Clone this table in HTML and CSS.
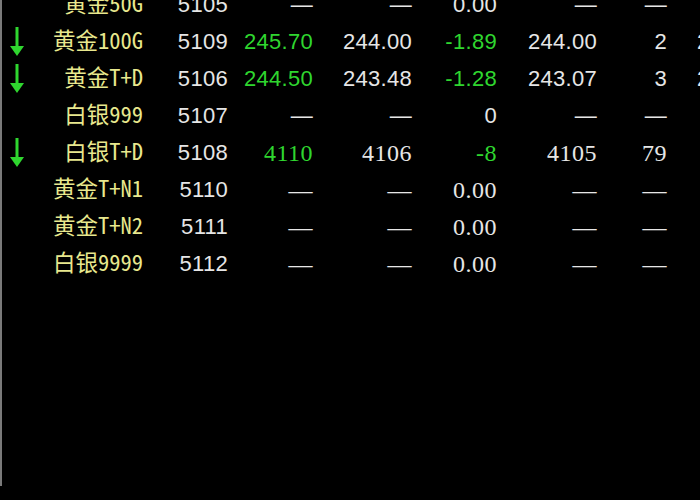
FILE: index.html
```html
<!DOCTYPE html>
<html lang="zh-CN">
<head>
    <meta charset="UTF-8" />
    <meta name="viewport" content="width=device-width, initial-scale=1.0" />
    <title>行情报价</title>
    <link rel="stylesheet" href="styles.css">
</head>
<body>
    <div class="quote-board">
        <div class="quote-row">
            <div class="trend"></div>
            <div class="name">黄金50G</div>
            <div class="code">5105</div>
            <div class="num">—</div>
            <div class="num wide">—</div>
            <div class="num">0.00</div>
            <div class="num wide">—</div>
            <div class="num short">—</div>
            <div class="extra"></div>
        </div>
        <div class="quote-row">
            <div class="trend"><svg class="arrow" viewBox="0 0 14 30"><rect x="5.5" y="0" width="3" height="20" /><polygon points="0,19 14,19 7,29" /></svg></div>
            <div class="name">黄金100G</div>
            <div class="code">5109</div>
            <div class="num down">245.70</div>
            <div class="num wide">244.00</div>
            <div class="num down">-1.89</div>
            <div class="num wide">244.00</div>
            <div class="num short">2</div>
            <div class="extra">2</div>
        </div>
        <div class="quote-row">
            <div class="trend"><svg class="arrow" viewBox="0 0 14 30"><rect x="5.5" y="0" width="3" height="20" /><polygon points="0,19 14,19 7,29" /></svg></div>
            <div class="name">黄金T+D</div>
            <div class="code">5106</div>
            <div class="num down">244.50</div>
            <div class="num wide">243.48</div>
            <div class="num down">-1.28</div>
            <div class="num wide">243.07</div>
            <div class="num short">3</div>
            <div class="extra">2</div>
        </div>
        <div class="quote-row">
            <div class="trend"></div>
            <div class="name">白银999</div>
            <div class="code">5107</div>
            <div class="num">—</div>
            <div class="num wide">—</div>
            <div class="num">0</div>
            <div class="num wide">—</div>
            <div class="num short">—</div>
            <div class="extra"></div>
        </div>
        <div class="quote-row serif">
            <div class="trend"><svg class="arrow" viewBox="0 0 14 30"><rect x="5.5" y="0" width="3" height="20" /><polygon points="0,19 14,19 7,29" /></svg></div>
            <div class="name">白银T+D</div>
            <div class="code">5108</div>
            <div class="num down">4110</div>
            <div class="num wide">4106</div>
            <div class="num down">-8</div>
            <div class="num wide">4105</div>
            <div class="num short">79</div>
            <div class="extra"></div>
        </div>
        <div class="quote-row serif">
            <div class="trend"></div>
            <div class="name">黄金T+N1</div>
            <div class="code">5110</div>
            <div class="num">—</div>
            <div class="num wide">—</div>
            <div class="num">0.00</div>
            <div class="num wide">—</div>
            <div class="num short">—</div>
            <div class="extra"></div>
        </div>
        <div class="quote-row serif">
            <div class="trend"></div>
            <div class="name">黄金T+N2</div>
            <div class="code">5111</div>
            <div class="num">—</div>
            <div class="num wide">—</div>
            <div class="num">0.00</div>
            <div class="num wide">—</div>
            <div class="num short">—</div>
            <div class="extra"></div>
        </div>
        <div class="quote-row serif">
            <div class="trend"></div>
            <div class="name">白银9999</div>
            <div class="code">5112</div>
            <div class="num">—</div>
            <div class="num wide">—</div>
            <div class="num">0.00</div>
            <div class="num wide">—</div>
            <div class="num short">—</div>
            <div class="extra"></div>
        </div>
    </div>
</body>
</html>
```

FILE: styles.css
```css
:root {
    --bg-color: #000;
    --text-color: #e6e6e6;
    --name-color: #e8e88e;
    --down-color: #2fd62f;
    --border-color: #7a7a7a;
    --row-height: 37px;
}

html,
body {
    margin: 0;
    padding: 0;
    height: 100%;
    background-color: var(--bg-color);
    overflow: hidden;
}

.quote-board {
    height: 100%;
    border-left: 2px solid var(--border-color);
    box-sizing: border-box;
}

.quote-row {
    display: grid;
    grid-template-columns: 30px 111px 85px 85px 99px 85px 100px 70px 1fr;
    align-items: center;
    height: var(--row-height);
    color: var(--text-color);
    font-family: 'Liberation Sans', Arial, sans-serif;
    font-size: 22px;
    letter-spacing: 0.3px;
    white-space: nowrap;
}

.quote-row:first-child {
    margin-top: -14px;
}

.trend {
    display: flex;
    justify-content: center;
    align-items: center;
}

.arrow {
    width: 14px;
    height: 30px;
    fill: var(--down-color);
}

.name {
    text-align: right;
    color: var(--name-color);
    font-family: 'Noto Sans Mono CJK SC', 'Noto Sans CJK SC', sans-serif;
    font-size: 22.5px;
    letter-spacing: 0;
    padding-bottom: 6px;
}

.code,
.num {
    text-align: right;
}

.num.down {
    color: var(--down-color);
}

.serif .num {
    font-family: 'Liberation Serif', 'Times New Roman', serif;
    font-size: 24px;
    letter-spacing: 0.5px;
}

.extra {
    padding-left: 30px;
    overflow: hidden;
}
```
